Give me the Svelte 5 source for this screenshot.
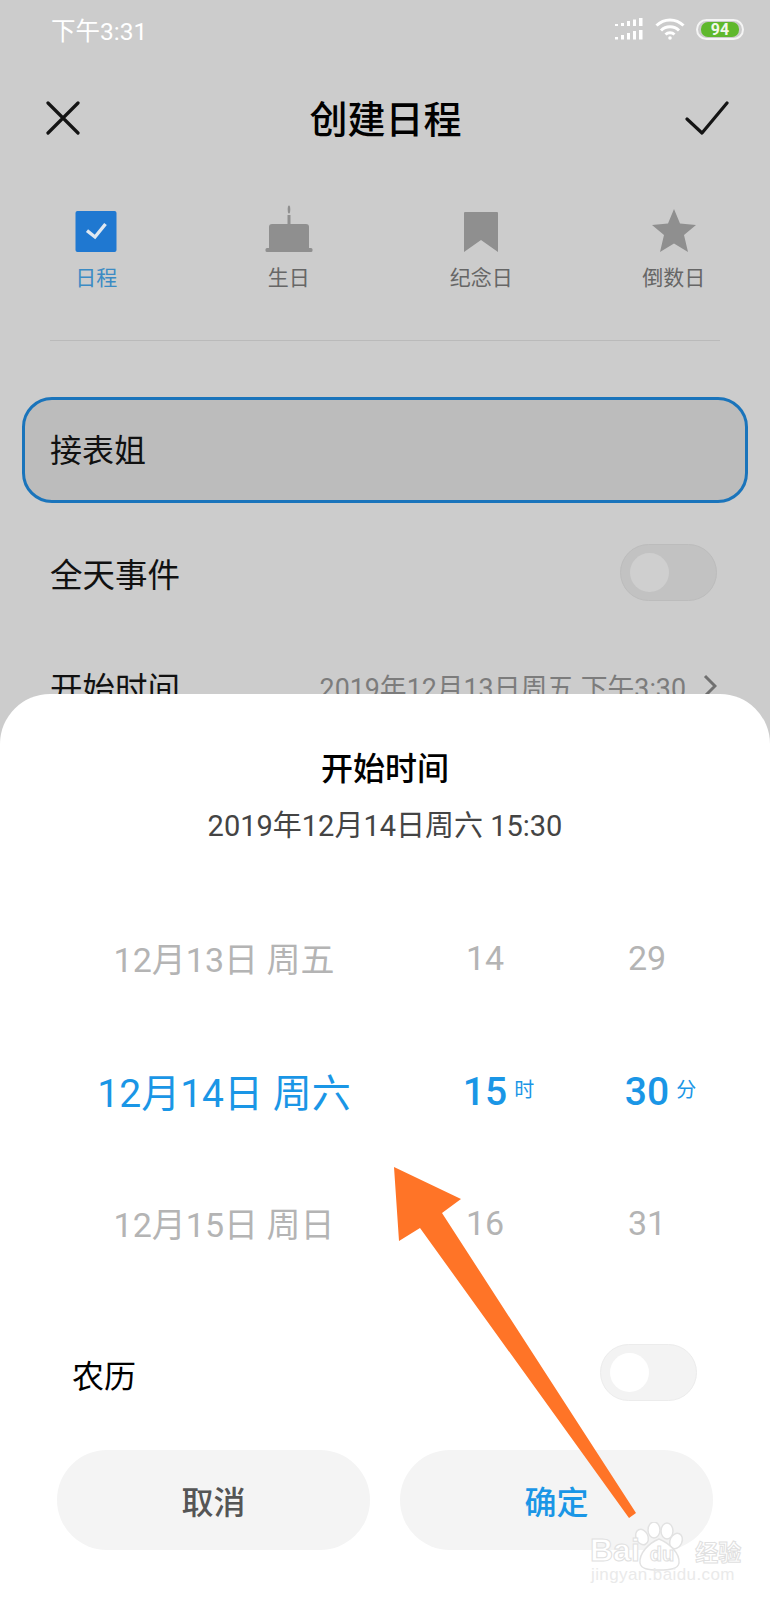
<script>
  const tabs = [
    { key: 'event', label: '日程', active: true },
    { key: 'birthday', label: '生日' },
    { key: 'anniversary', label: '纪念日' },
    { key: 'countdown', label: '倒数日' }
  ];

  const wheel = [
    { top: '12月13日 周五', value: '12月14日 周六', bottom: '12月15日 周日' },
    { top: '14', value: '15', unit: '时', bottom: '16' },
    { top: '29', value: '30', unit: '分', bottom: '31' }
  ];
</script>

<div class="screen">
  <div class="status">
    <span class="clock">下午3:31</span>
    <div class="status-icons">
      <svg width="28" height="22" viewBox="0 0 28 22" fill="#fff">
        <rect x="0" y="6" width="3" height="2" /><rect x="6" y="5" width="3" height="3" /><rect x="12" y="3" width="3" height="5" /><rect x="18" y="1.500" width="3" height="6.500" /><rect x="24" y="0" width="3.500" height="8" />
        <rect x="0" y="19" width="3" height="2.500" /><rect x="6" y="17" width="3" height="4.500" /><rect x="12" y="15" width="3" height="6.500" /><rect x="18" y="13" width="3" height="8.500" /><rect x="24" y="12" width="3.500" height="9.500" />
      </svg>
      <svg class="wifi" width="30" height="22" viewBox="0 0 30 22" fill="none" stroke="#fff" stroke-width="3">
        <path d="M1.500 7.500C9 0 21 0 28.500 7.500" />
        <path d="M6 12.500C11 7.500 19 7.500 24 12.500" />
        <path d="M10.500 16.500C13 14.200 17 14.200 19.500 16.500" />
        <circle cx="15" cy="20" r="1.800" fill="#fff" stroke="none" />
      </svg>
      <div class="battery"><span>94</span></div>
    </div>
  </div>

  <div class="nav">
    <svg width="34" height="34" viewBox="0 0 34 34" fill="none" stroke="#141414" stroke-width="3.200" stroke-linecap="round">
      <path d="M2 2L32 32M32 2L2 32" />
    </svg>
    <h1>创建日程</h1>
    <svg class="confirm" width="44" height="34" viewBox="0 0 44 34" fill="none" stroke="#141414" stroke-width="3.200" stroke-linecap="round" stroke-linejoin="round">
      <path d="M2 18L17 32L42 2" />
    </svg>
  </div>

  <div class="tabs">
    {#each tabs as tab}
      <div class="tab" class:active={tab.active}>
        <svg width="50" height="50" viewBox="0 0 50 50" fill="#8f8f8f">
          {#if tab.key === 'event'}
            <rect x="4.500" y="6" width="41" height="41" rx="2" fill="#1f78d1" />
            <path d="M16 25.700L24 32L34.500 19" fill="none" stroke="#dfe8f1" stroke-width="3.400" />
          {:else if tab.key === 'birthday'}
            <ellipse cx="25" cy="4.500" rx="1.300" ry="4" />
            <rect x="23.500" y="10" width="3" height="10" />
            <path d="M5 22a3 3 0 0 1 3-3h34a3 3 0 0 1 3 3v21H5z" />
            <rect x="1.500" y="43" width="47" height="4" rx="1.500" />
          {:else if tab.key === 'anniversary'}
            <path d="M8 8a1 1 0 0 1 1-1h32a1 1 0 0 1 1 1v39L25 35L8 47z" />
          {:else}
            <path d="M25 4L31 18.500L47 20L35 30L39 47L25 38.500L11 47L15 30L3 20L19 18.500z" />
          {/if}
        </svg>
        <span>{tab.label}</span>
      </div>
    {/each}
  </div>

  <div class="divider"></div>

  <div class="title-input">接表姐</div>

  <div class="row">
    <span>全天事件</span>
    <div class="toggle dim"><i></i></div>
  </div>

  <div class="row start">
    <span>开始时间</span>
    <div class="start-value">
      <span>2019年12月13日周五 下午3:30</span>
      <svg width="14" height="24" viewBox="0 0 14 24" fill="none" stroke="#707070" stroke-width="3">
        <path d="M2 2L12 12L2 22" />
      </svg>
    </div>
  </div>

  <div class="sheet">
    <h2>开始时间</h2>
    <p class="current">2019年12月14日周六 15:30</p>

    <div class="wheel">
      {#each wheel as col}
        <div class="col">
          <div class="cell">{col.top}</div>
          <div class="cell selected">
            <span class="num">{col.value}{#if col.unit}<em>{col.unit}</em>{/if}</span>
          </div>
          <div class="cell">{col.bottom}</div>
        </div>
      {/each}
    </div>

    <div class="lunar">
      <span>农历</span>
      <div class="toggle"><i></i></div>
    </div>

    <div class="actions">
      <div class="btn">取消</div>
      <div class="btn ok">确定</div>
    </div>
  </div>

  <!-- annotation arrow drawn on top of the screenshot -->
  <svg class="arrow" width="770" height="1600" viewBox="0 0 770 1600">
    <polygon points="394,1167 461,1199 442,1213 636,1513 629,1518 420,1228 399,1241" fill="#ff7427" />
  </svg>

  <div class="watermark">
    <svg class="paw" width="60" height="50" viewBox="0 0 60 50" fill="#fff" stroke="#e2e2e2" stroke-width="1.500">
      <ellipse cx="10" cy="15" rx="6" ry="8" transform="rotate(-25 10 15)" />
      <ellipse cx="22" cy="8" rx="6" ry="8" />
      <ellipse cx="35" cy="9" rx="6" ry="8" />
      <ellipse cx="44" cy="19" rx="6" ry="8" transform="rotate(25 44 19)" />
      <path d="M27 17C17 21 7 31 8 41C9 47 16 48 27 48C38 48 46 47 47 41C48 31 37 21 27 17z" />
    </svg>
    <div class="mark-line">
      <span class="bai">Bai</span><span class="du">du</span><span class="jy">经验</span>
    </div>
    <div class="mark-url">jingyan.baidu.com</div>
  </div>
</div>

<style>
  :global(body) {
    margin: 0;
    background: #ccc;
  }

  .screen {
    position: relative;
    width: 770px;
    height: 1600px;
    overflow: hidden;
    background: #ccc;
    color: #111;
    font-family: Roboto, "Noto Sans CJK SC", sans-serif;
  }

  .status {
    height: 60px;
    padding: 0 26px 2px 51px;
    box-sizing: border-box;
    display: flex;
    align-items: center;
    justify-content: space-between;
    color: #fff;
  }

  .clock {
    font-size: 24.500px;
  }

  .status-icons {
    display: flex;
    align-items: center;
    gap: 12px;
  }

  .battery {
    width: 48px;
    height: 21px;
    box-sizing: border-box;
    margin-left: -1px;
    border: 2px solid #f4f4f4;
    border-radius: 11px;
    padding: 1px 3px;
    display: flex;
  }

  .battery span {
    flex: 1;
    background: #5fb82d;
    border-radius: 7px;
    color: #f2f7ea;
    font-size: 16px;
    font-weight: 700;
    line-height: 15px;
    text-align: center;
  }

  .nav {
    height: 116px;
    padding: 0 45px 0 46px;
    display: grid;
    grid-template-columns: 1fr auto 1fr;
    align-items: center;
  }

  .nav > svg:last-child {
    margin-right: -4px;
  }

  .nav h1 {
    margin: 0;
    padding-bottom: 4px;
    font-size: 38px;
    font-weight: 500;
    color: #000;
  }

  .confirm {
    justify-self: end;
  }

  .tabs {
    display: grid;
    grid-template-columns: repeat(4, 1fr);
    padding-top: 29px;
  }

  .tab {
    display: flex;
    flex-direction: column;
    align-items: center;
    color: #666;
    font-size: 21px;
    line-height: 32px;
  }

  .tab svg {
    margin-bottom: 7px;
  }

  .tab.active {
    color: #3b8bc4;
  }

  .divider {
    height: 1px;
    margin: 46px 50px 0 50px;
    background: #bababa;
  }

  .title-input {
    height: 106px;
    box-sizing: border-box;
    margin: 56px 22px 0 22px;
    padding: 0 0 5px 25px;
    display: flex;
    align-items: center;
    background: #bcbcbc;
    border: 3px solid #1a74bb;
    border-radius: 30px;
    font-size: 32px;
  }

  .row {
    height: 114px;
    margin-top: 12px;
    padding: 0 53px 0 50px;
    display: flex;
    align-items: center;
    justify-content: space-between;
    font-size: 32.500px;
  }

  .row.start {
    height: 110px;
    margin-top: 2px;
    padding-right: 53px;
  }

  .start-value {
    display: flex;
    align-items: center;
    gap: 17px;
    font-size: 26.800px;
    color: #7c7c7c;
  }

  .toggle {
    width: 97px;
    height: 57px;
    box-sizing: border-box;
    padding: 8px 9px;
    background: #f3f3f3;
    border: 1px solid #ececec;
    border-radius: 29px;
  }

  .toggle i {
    display: block;
    width: 39px;
    height: 39px;
    background: #fff;
    border-radius: 50%;
  }

  .toggle.dim {
    background: #c2c2c2;
    border-color: #bcbcbc;
  }

  .toggle.dim i {
    background: #cfcfcf;
  }

  .sheet {
    position: absolute;
    left: 0;
    right: 0;
    top: 694px;
    bottom: 0;
    background: #fff;
    border-radius: 50px 50px 0 0;
    text-align: center;
  }

  .sheet h2 {
    margin: 53px 0 0 0;
    font-size: 32px;
    line-height: 44px;
    font-weight: 500;
    color: #000;
  }

  .current {
    margin: 13px 0 0 0;
    font-size: 29px;
    line-height: 44px;
    color: #444;
  }

  .wheel {
    margin-top: 43.500px;
    padding-left: 64px;
    display: grid;
    grid-template-columns: 320px 202px 122px;
  }

  .cell {
    height: 132.500px;
    display: flex;
    align-items: center;
    justify-content: center;
    font-size: 34px;
    color: #b4b4b4;
    white-space: nowrap;
  }

  .cell.selected {
    font-size: 39px;
    font-weight: 400;
    color: #1a96e6;
  }

  .col:not(:first-child) .cell.selected {
    box-sizing: border-box;
    padding-top: 4px;
    font-weight: 500;
  }

  .num {
    position: relative;
  }

  .num em {
    position: absolute;
    left: calc(100% + 7px);
    top: 7px;
    font-size: 20px;
    font-style: normal;
    font-weight: 400;
    line-height: 28px;
  }

  .lunar {
    height: 57px;
    margin-top: 55px;
    padding: 0 73px 0 72px;
    display: flex;
    align-items: center;
    justify-content: space-between;
    font-size: 32px;
    color: #000;
  }

  .lunar span {
    padding-top: 3px;
  }

  .actions {
    margin-top: 49px;
    padding: 0 57px;
    display: flex;
    gap: 30px;
  }

  .btn {
    flex: 1;
    height: 100px;
    border-radius: 50px;
    background: #f4f4f4;
    display: flex;
    align-items: center;
    justify-content: center;
    font-size: 32px;
    font-weight: 500;
    color: #555;
  }

  .btn.ok {
    color: #1a96e6;
  }

  .arrow {
    position: absolute;
    left: 0;
    top: 0;
  }

  .watermark {
    position: absolute;
    left: 590px;
    top: 1520px;
    width: 140px;
    height: 66px;
  }

  .paw {
    position: absolute;
    left: 42px;
    top: 2px;
  }

  .mark-line {
    position: absolute;
    left: 0;
    top: 12px;
    width: max-content;
    white-space: nowrap;
    display: flex;
    align-items: baseline;
    color: #fff;
    -webkit-text-stroke: 1px #e0e0e0;
    font-family: "Liberation Sans", "Noto Sans CJK SC", sans-serif;
    font-weight: 700;
  }

  .bai {
    font-size: 32px;
  }

  .du {
    font-size: 20px;
    margin-left: 10px;
  }

  .jy {
    font-size: 23px;
    margin-left: 21px;
    font-family: "Noto Sans CJK SC", sans-serif;
  }

  .mark-url {
    position: absolute;
    left: 1px;
    top: 45px;
    font-family: "Liberation Sans", sans-serif;
    font-size: 17px;
    line-height: 20px;
    letter-spacing: 0.4px;
    color: #eaeaea;
    white-space: nowrap;
  }
</style>
